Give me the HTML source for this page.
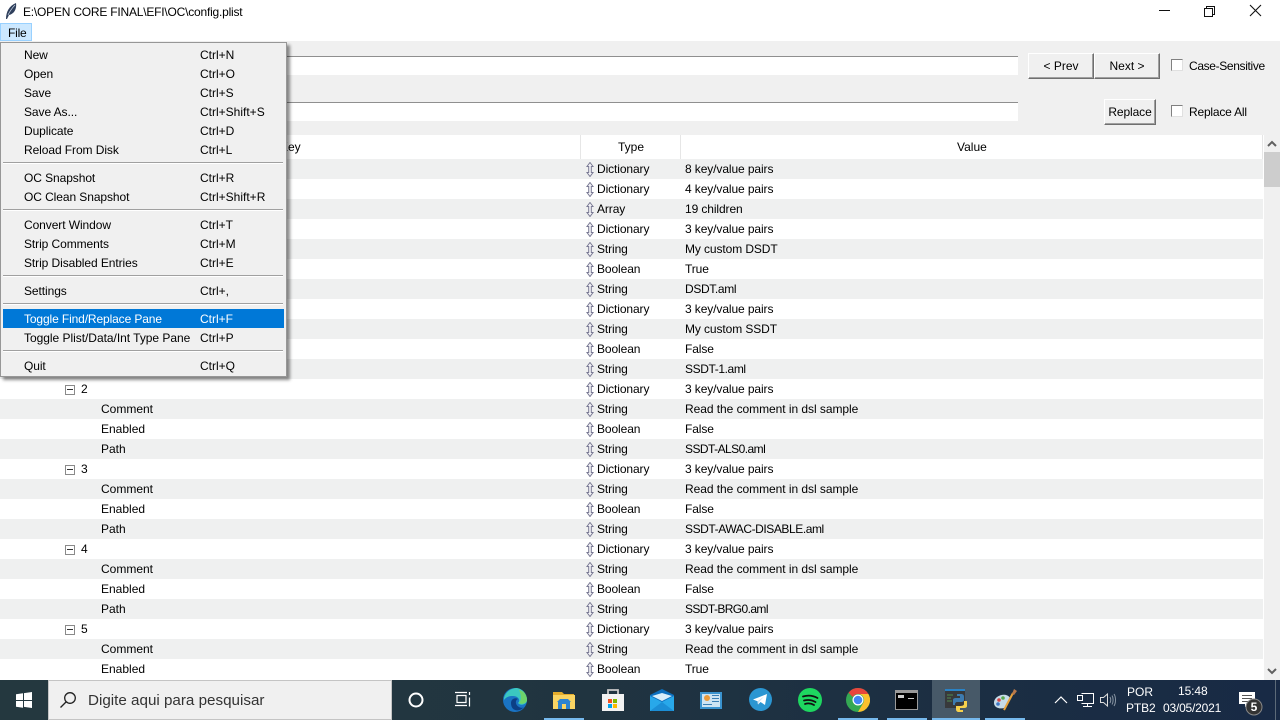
<!DOCTYPE html>
<html><head><meta charset="utf-8"><style>
*{box-sizing:border-box}
html,body{margin:0;padding:0;width:1280px;height:720px;overflow:hidden;background:#fff;font:12px/20px "Liberation Sans",sans-serif;color:#000}
.a{position:absolute;white-space:nowrap}
.r{position:absolute;left:0;width:1263px;height:20px}
.g{background:#eff0f0}
.r span{position:absolute;top:0;white-space:nowrap}
.k{left:101px}.n{left:81px}.t{left:597px;letter-spacing:-.1px}.v{left:685px;letter-spacing:-.1px}
.r svg{position:absolute;left:586px;top:3px}
.b{position:absolute;background:#f0f0f0;border:1px solid;border-color:#fff #6f6f6f #6f6f6f #fff;box-shadow:inset -1px -1px 0 #a0a0a0;text-align:center;line-height:24px;height:26px}
.c{position:absolute;width:12px;height:12px;background:#fff;border:1px solid;border-color:#808080 #e0e0e0 #e0e0e0 #808080}
.m{position:absolute;left:24px;height:20px;padding-top:1px;line-height:19px;white-space:nowrap;letter-spacing:-.08px}
.s{position:absolute;left:200px;height:20px;padding-top:1px;line-height:19px;white-space:nowrap}
.sep{position:absolute;left:3px;width:280px;height:2px;background:linear-gradient(#a0a0a0 50%,#fff 50%)}
.ul{position:absolute;top:718px;height:2px;background:#76b9ed}
.box{position:absolute;left:65px;width:10px;height:10px;border:1px solid #8a8a8a;background:#fff}
.box:after{content:"";position:absolute;left:1px;top:3px;width:6px;height:1px;background:#333}
</style></head><body>
<svg width="0" height="0" style="position:absolute"><defs><symbol id="ar" viewBox="0 0 8 15"><path d="M4 .5L7 4.500H5.300V10.500H7L4 14.500 1 10.500H2.700V4.500H1Z" fill="#f4f4f8" stroke="#7a7a94" stroke-width="1"/></symbol></defs></svg>

<!-- title bar -->
<svg class="a" style="left:5px;top:3px" width="12" height="16" viewBox="0 0 12 16"><path d="M1 16C1 9 4 3 11 0 12 6 9 11 4 12L2 16Z" fill="#2f3f5c"/><path d="M3 12C5 8 7 5 10 2" stroke="#c8d4e4" stroke-width=".7" fill="none"/></svg>
<div class="a" style="left:23px;top:2px;letter-spacing:-.21px">E:\OPEN CORE FINAL\EFI\OC\config.plist</div>
<svg class="a" style="left:1150px;top:0" width="120" height="22" fill="none" stroke="#111"><path d="M9 10.500H20"/><path d="M54.500 8.500h8v8h-8zM56.500 8.500v-2h8v8h-2"/><path d="M100 5L111 16M111 5L100 16" stroke-width="1.100"/></svg>

<!-- find pane -->
<div class="a" style="left:0;top:41px;width:1280px;height:94px;background:#f0f0f0"></div>
<div class="a" style="left:0;top:56px;width:1018px;height:19px;background:#fff;border-top:1px solid #8f8f8f"></div>
<div class="a" style="left:0;top:102px;width:1018px;height:19px;background:#fff;border-top:1px solid #8f8f8f"></div>
<div class="b" style="left:1028px;top:53px;width:66px">&lt; Prev</div>
<div class="b" style="left:1094px;top:53px;width:66px">Next &gt;</div>
<div class="c" style="left:1171px;top:59px"></div>
<div class="a" style="left:1189px;top:56px;letter-spacing:-.35px">Case-Sensitive</div>
<div class="b" style="left:1104px;top:99px;width:52px;letter-spacing:-.1px">Replace</div>
<div class="c" style="left:1171px;top:105px"></div>
<div class="a" style="left:1189px;top:102px;letter-spacing:-.2px">Replace All</div>

<!-- header -->
<div class="a" style="left:0;top:135px;width:1263px;height:24px;background:#fff"></div>
<div class="a" style="left:580px;top:135px;width:1px;height:24px;background:#e6e6e6"></div>
<div class="a" style="left:680px;top:135px;width:1px;height:24px;background:#e6e6e6"></div>
<div class="a" style="left:1262px;top:135px;width:1px;height:24px;background:#e6e6e6"></div>
<div class="a" style="left:280px;top:137px">Key</div>
<div class="a" style="left:618px;top:137px">Type</div>
<div class="a" style="left:957px;top:137px">Value</div>

<!-- rows -->
<div class="r g" style="top:159px"><svg width="8" height="15"><use href="#ar"/></svg><span class="t">Dictionary</span><span class="v">8 key/value pairs</span></div>
<div class="r" style="top:179px"><svg width="8" height="15"><use href="#ar"/></svg><span class="t">Dictionary</span><span class="v">4 key/value pairs</span></div>
<div class="r g" style="top:199px"><svg width="8" height="15"><use href="#ar"/></svg><span class="t">Array</span><span class="v">19 children</span></div>
<div class="r" style="top:219px"><svg width="8" height="15"><use href="#ar"/></svg><span class="t">Dictionary</span><span class="v">3 key/value pairs</span></div>
<div class="r g" style="top:239px"><svg width="8" height="15"><use href="#ar"/></svg><span class="t">String</span><span class="v">My custom DSDT</span></div>
<div class="r" style="top:259px"><svg width="8" height="15"><use href="#ar"/></svg><span class="t">Boolean</span><span class="v">True</span></div>
<div class="r g" style="top:279px"><svg width="8" height="15"><use href="#ar"/></svg><span class="t">String</span><span class="v" style="letter-spacing:-.35px">DSDT.aml</span></div>
<div class="r" style="top:299px"><svg width="8" height="15"><use href="#ar"/></svg><span class="t">Dictionary</span><span class="v">3 key/value pairs</span></div>
<div class="r g" style="top:319px"><svg width="8" height="15"><use href="#ar"/></svg><span class="t">String</span><span class="v">My custom SSDT</span></div>
<div class="r" style="top:339px"><svg width="8" height="15"><use href="#ar"/></svg><span class="t">Boolean</span><span class="v">False</span></div>
<div class="r g" style="top:359px"><svg width="8" height="15"><use href="#ar"/></svg><span class="t">String</span><span class="v" style="letter-spacing:-.4px">SSDT-1.aml</span></div>
<div class="r" style="top:379px"><div class="box" style="top:6px"></div><span class="n">2</span><svg width="8" height="15"><use href="#ar"/></svg><span class="t">Dictionary</span><span class="v">3 key/value pairs</span></div>
<div class="r g" style="top:399px"><span class="k">Comment</span><svg width="8" height="15"><use href="#ar"/></svg><span class="t">String</span><span class="v" style="letter-spacing:-.05px">Read the comment in dsl sample</span></div>
<div class="r" style="top:419px"><span class="k">Enabled</span><svg width="8" height="15"><use href="#ar"/></svg><span class="t">Boolean</span><span class="v">False</span></div>
<div class="r g" style="top:439px"><span class="k">Path</span><svg width="8" height="15"><use href="#ar"/></svg><span class="t">String</span><span class="v" style="letter-spacing:-.55px">SSDT-ALS0.aml</span></div>
<div class="r" style="top:459px"><div class="box" style="top:6px"></div><span class="n">3</span><svg width="8" height="15"><use href="#ar"/></svg><span class="t">Dictionary</span><span class="v">3 key/value pairs</span></div>
<div class="r g" style="top:479px"><span class="k">Comment</span><svg width="8" height="15"><use href="#ar"/></svg><span class="t">String</span><span class="v" style="letter-spacing:-.05px">Read the comment in dsl sample</span></div>
<div class="r" style="top:499px"><span class="k">Enabled</span><svg width="8" height="15"><use href="#ar"/></svg><span class="t">Boolean</span><span class="v">False</span></div>
<div class="r g" style="top:519px"><span class="k">Path</span><svg width="8" height="15"><use href="#ar"/></svg><span class="t">String</span><span class="v" style="letter-spacing:-.43px">SSDT-AWAC-DISABLE.aml</span></div>
<div class="r" style="top:539px"><div class="box" style="top:6px"></div><span class="n">4</span><svg width="8" height="15"><use href="#ar"/></svg><span class="t">Dictionary</span><span class="v">3 key/value pairs</span></div>
<div class="r g" style="top:559px"><span class="k">Comment</span><svg width="8" height="15"><use href="#ar"/></svg><span class="t">String</span><span class="v" style="letter-spacing:-.05px">Read the comment in dsl sample</span></div>
<div class="r" style="top:579px"><span class="k">Enabled</span><svg width="8" height="15"><use href="#ar"/></svg><span class="t">Boolean</span><span class="v">False</span></div>
<div class="r g" style="top:599px"><span class="k">Path</span><svg width="8" height="15"><use href="#ar"/></svg><span class="t">String</span><span class="v" style="letter-spacing:-.6px">SSDT-BRG0.aml</span></div>
<div class="r" style="top:619px"><div class="box" style="top:6px"></div><span class="n">5</span><svg width="8" height="15"><use href="#ar"/></svg><span class="t">Dictionary</span><span class="v">3 key/value pairs</span></div>
<div class="r g" style="top:639px"><span class="k">Comment</span><svg width="8" height="15"><use href="#ar"/></svg><span class="t">String</span><span class="v" style="letter-spacing:-.05px">Read the comment in dsl sample</span></div>
<div class="r" style="top:659px"><span class="k">Enabled</span><svg width="8" height="15"><use href="#ar"/></svg><span class="t">Boolean</span><span class="v">True</span></div>

<!-- scrollbar -->
<div class="a" style="left:1264px;top:135px;width:16px;height:545px;background:#f0f0f0"></div>
<div class="a" style="left:1264px;top:152px;width:16px;height:35px;background:#cdcdcd"></div>
<svg class="a" style="left:1264px;top:135px" width="16" height="545" fill="none" stroke="#606060" stroke-width="2"><path d="M4 11L8 7 12 11"/><path d="M4 534L8 538 12 534"/></svg>

<!-- menubar + menu -->
<div class="a" style="left:0;top:23px;width:32px;height:18px;background:#cce8ff;border:1px solid #99d1ff;line-height:19px;padding-left:7px;letter-spacing:-.2px">File</div>
<div class="a" style="left:0;top:42px;width:287px;height:335px;background:#f0f0f0;border:1px solid #979797;box-shadow:3px 3px 3px rgba(0,0,0,.45)"></div>
<div class="a" style="left:3px;top:309px;width:281px;height:19px;background:#0078d7"></div>
<div class="m" style="top:45px">New</div><div class="s" style="top:45px">Ctrl+N</div>
<div class="m" style="top:64px">Open</div><div class="s" style="top:64px">Ctrl+O</div>
<div class="m" style="top:83px">Save</div><div class="s" style="top:83px">Ctrl+S</div>
<div class="m" style="top:102px">Save As...</div><div class="s" style="top:102px">Ctrl+Shift+S</div>
<div class="m" style="top:121px">Duplicate</div><div class="s" style="top:121px">Ctrl+D</div>
<div class="m" style="top:140px">Reload From Disk</div><div class="s" style="top:140px">Ctrl+L</div>
<div class="sep" style="top:162px"></div>
<div class="m" style="top:168px">OC Snapshot</div><div class="s" style="top:168px">Ctrl+R</div>
<div class="m" style="top:187px">OC Clean Snapshot</div><div class="s" style="top:187px">Ctrl+Shift+R</div>
<div class="sep" style="top:209px"></div>
<div class="m" style="top:215px">Convert Window</div><div class="s" style="top:215px">Ctrl+T</div>
<div class="m" style="top:234px">Strip Comments</div><div class="s" style="top:234px">Ctrl+M</div>
<div class="m" style="top:253px">Strip Disabled Entries</div><div class="s" style="top:253px">Ctrl+E</div>
<div class="sep" style="top:275px"></div>
<div class="m" style="top:281px">Settings</div><div class="s" style="top:281px">Ctrl+,</div>
<div class="sep" style="top:303px"></div>
<div class="m" style="top:309px;color:#fff;letter-spacing:-.12px">Toggle Find/Replace Pane</div><div class="s" style="top:309px;color:#fff">Ctrl+F</div>
<div class="m" style="top:328px;letter-spacing:-.03px">Toggle Plist/Data/Int Type Pane</div><div class="s" style="top:328px">Ctrl+P</div>
<div class="sep" style="top:350px"></div>
<div class="m" style="top:356px">Quit</div><div class="s" style="top:356px">Ctrl+Q</div>

<!-- taskbar -->
<div class="a" style="left:0;top:680px;width:1280px;height:40px;background:linear-gradient(90deg,#24383f 0%,#213540 40%,#1c2f42 70%,#182a45 100%)"></div>
<svg class="a" style="left:16px;top:692px" width="17" height="17" fill="#fff"><path d="M0 2.300L7 1.300V8H0ZM8 1.100L16 0V8H8ZM0 9H7V15.700L0 14.700ZM8 9H16V16L8 14.900Z"/></svg>
<div class="a" style="left:48px;top:680px;width:344px;height:40px;background:#f0f0f0;border:1px solid #c4c4c4"></div>
<svg class="a" style="left:59px;top:691px" width="18" height="18" fill="none" stroke="#222" stroke-width="1.300"><circle cx="11" cy="7" r="5.300"/><path d="M7 11L1.500 16.500"/></svg>
<div class="a" style="left:88px;top:691px;font-size:15.200px;color:#333">Digite aqui para pesquisar</div>
<svg class="a" style="left:408px;top:692px" width="16" height="16" fill="none" stroke="#fff" stroke-width="2"><circle cx="8" cy="8" r="6.500"/></svg>
<svg class="a" style="left:455px;top:691px" width="18" height="18" fill="none" stroke="#fff" stroke-width="1.200"><path d="M0 1.500H12M0 14.500H12M2 4.500H11V11.500H2ZM14.500 1V4M14.500 6.500V15.500" /></svg>
<!-- edge -->
<svg class="a" style="left:503px;top:688px" width="24" height="24"><circle cx="12" cy="12" r="12" fill="#1a74c4"/><path d="M1 10C3 2 10 0 14 0 20 1 24 6 24 12 24 17 17 18 15 15 18 12 15 8 10 8 6 8 3 9 1 12Z" fill="#3bc7c0"/><path d="M16 2C21 3 24 7 24 12 24 15 19 17 16 15 19 12 18 6 16 2Z" fill="#6ed46a"/><path d="M8 15C8 11 12 9 15 11 12 12 12 17 16 19 18 20 20 20 21 19 17 24 8 24 8 15Z" fill="#0c3f86"/></svg>
<!-- explorer -->
<svg class="a" style="left:553px;top:691px" width="22" height="19"><path d="M0 1H9L11 3H21V18H0Z" fill="#e5ac2b"/><path d="M0 4H22V18H0Z" fill="#fad462"/><path d="M5 18V11H4L7 8H15L18 11H17V18H13V13H9V18Z" fill="#2d83cf"/></svg>
<!-- store -->
<svg class="a" style="left:601px;top:688px" width="24" height="24"><path d="M7 6V2H17V6" fill="none" stroke="#c8c8c8" stroke-width="1.800"/><path d="M1 6H23V23H1Z" fill="#f2f2f2"/><path d="M7 11H11V15H7Z" fill="#f25022"/><path d="M12 11H16V15H12Z" fill="#7fba00"/><path d="M7 16H11V20H7Z" fill="#00a4ef"/><path d="M12 16H16V20H12Z" fill="#ffb900"/></svg>
<!-- mail -->
<svg class="a" style="left:650px;top:689px" width="24" height="22"><path d="M0 6L12 0 24 6V22H0Z" fill="#0c6fbe"/><path d="M0 7L12 13 24 7V22H0Z" fill="#28a8ea"/><path d="M2 7L12 12 22 7 12 4Z" fill="#d8eefa"/><path d="M0 22L12 13 24 22Z" fill="#1b8ed6"/></svg>
<!-- control panel -->
<svg class="a" style="left:700px;top:692px" width="22" height="17"><path d="M0 0H22V17H0Z" fill="#3a93cf"/><path d="M2 2H20V15H2Z" fill="#cde4f3"/><circle cx="7" cy="6" r="3" fill="#e89a3c"/><path d="M12 3H19V4H12ZM12 6H19V7H12ZM12 9H19V10H12ZM3 12H12V13H3Z" fill="#3a7fb5"/></svg>
<!-- telegram -->
<svg class="a" style="left:749px;top:688px" width="23" height="23"><circle cx="11.500" cy="11.500" r="11.500" fill="#2b96d2"/><path d="M4 11.500L18 6 16 17 11.500 14 9 16.500 8.500 13.300Z" fill="#fff"/><path d="M8.500 13.300L15 8.500 10.500 13.500 9 16.500Z" fill="#c9dff0"/></svg>
<!-- spotify -->
<svg class="a" style="left:798px;top:688px" width="24" height="24" fill="none"><circle cx="12" cy="12" r="12" fill="#1ed760"/><path d="M5 8.500C10 7 15 7.500 19.500 10M6 12.500C10 11.500 14 12 17.500 14M7 16C10 15 13.500 15.500 16 17" stroke="#111" stroke-width="1.800" stroke-linecap="round"/></svg>
<!-- chrome -->
<svg class="a" style="left:846px;top:688px" width="24" height="24"><circle cx="12" cy="12" r="12" fill="#34a853"/><path d="M12 0A12 12 0 0 1 22.400 6H12A6 6 0 0 0 6.800 9L2.500 4.700A12 12 0 0 1 12 0Z" fill="#e8453c"/><path d="M22.400 6A12 12 0 0 1 12 24L17.200 15A6 6 0 0 0 12 6Z" fill="#fbc02d"/><circle cx="12" cy="12" r="5.500" fill="#fff"/><circle cx="12" cy="12" r="4.300" fill="#4285f4"/></svg>
<!-- cmd -->
<svg class="a" style="left:895px;top:690px" width="23" height="20"><path d="M0 0H23V20H0Z" fill="#9a9a9a"/><path d="M1 3H22V19H1Z" fill="#000"/><path d="M3 5H9V8H3ZM13 8H19V9H13Z" fill="#ccc"/></svg>
<!-- python -->
<div class="a" style="left:932px;top:680px;width:48px;height:40px;background:#475968"></div>
<svg class="a" style="left:945px;top:689px" width="24" height="24"><path d="M0 0H20V19H0Z" fill="#38393b"/><path d="M0 0H20V2H0Z" fill="#2a83c6"/><path d="M2 6H8M2 9H6M2 12H7" stroke="#4f8a4f"/><path d="M8 16V11C8 9 10 9 12 9H15V7H12V5H16C18 5 19 6 19 8V11C19 13 17 13 15 13H12C11 13 10 14 10 15V16Z" fill="#3d7bb0"/><path d="M22 12V17C22 19 20 19 18 19H15V21H18V23H14C12 23 11 22 11 20V17H14C16 17 19 17 19 15V12Z" fill="#f7d14c"/></svg>
<!-- paint -->
<svg class="a" style="left:993px;top:688px" width="24" height="24"><path d="M1 15C1 9 8 6 13 7 17 8 18 11 15 13 13 15 16 17 13 19 8 22 1 20 1 15Z" fill="#c6dbe8"/><circle cx="6" cy="12" r="1.800" fill="#d64545"/><circle cx="10" cy="10" r="1.800" fill="#59a84e"/><circle cx="5" cy="16" r="1.800" fill="#3f78c4"/><path d="M11 22L20 5" stroke="#e8a33c" stroke-width="2"/><path d="M19 6L21 1 24 3 21 7Z" fill="#b9794a"/></svg>
<div class="ul" style="left:544px;width:40px"></div>
<div class="ul" style="left:838px;width:40px"></div>
<div class="ul" style="left:887px;width:40px"></div>
<div class="ul" style="left:932px;width:48px"></div>
<div class="ul" style="left:985px;width:40px"></div>

<!-- tray -->
<svg class="a" style="left:1054px;top:693px" width="14" height="14" fill="none" stroke="#fff" stroke-width="1.200"><path d="M1 10L7 4 13 10"/></svg>
<svg class="a" style="left:1077px;top:693px" width="17" height="15" fill="none" stroke="#fff"><path d="M4.500 .5H16.500V10.500H4.500M10.500 10.500V13.500M6 13.500H15M.5 2.500H5.500V7.500H.5Z"/></svg>
<svg class="a" style="left:1100px;top:692px" width="17" height="16" fill="none" stroke="#ddd"><path d="M.5 5.500H3.500L7.500 2V14L3.500 10.500H.5Z"/><path d="M10 5C11 7 11 9 10 11M12 3.500C13.500 6 13.500 10 12 12.500M14 2C16 5 16 11 14 14" stroke="#8a96a4"/></svg>
<div class="a" style="left:1127px;top:682px;color:#fff">POR</div>
<div class="a" style="left:1126px;top:698px;color:#fff;letter-spacing:-.1px">PTB2</div>
<div class="a" style="left:1178px;top:681px;color:#fff;letter-spacing:-.1px">15:48</div>
<div class="a" style="left:1163px;top:698px;color:#fff;letter-spacing:-.2px">03/05/2021</div>
<svg class="a" style="left:1238px;top:691px" width="28" height="26"><path d="M1 1H17V13H10L7 16V13H1Z" fill="#fff"/><path d="M4 4.500H14M4 7.500H14M4 10.500H11" stroke="#555"/><circle cx="16" cy="16" r="8" fill="#333" stroke="#888"/><text x="16" y="20" text-anchor="middle" font-family="Liberation Sans" font-size="12" font-weight="bold" fill="#fff">5</text></svg>
<div class="a" style="left:1275px;top:680px;width:1px;height:40px;background:#5c6a78"></div>
</body></html>
